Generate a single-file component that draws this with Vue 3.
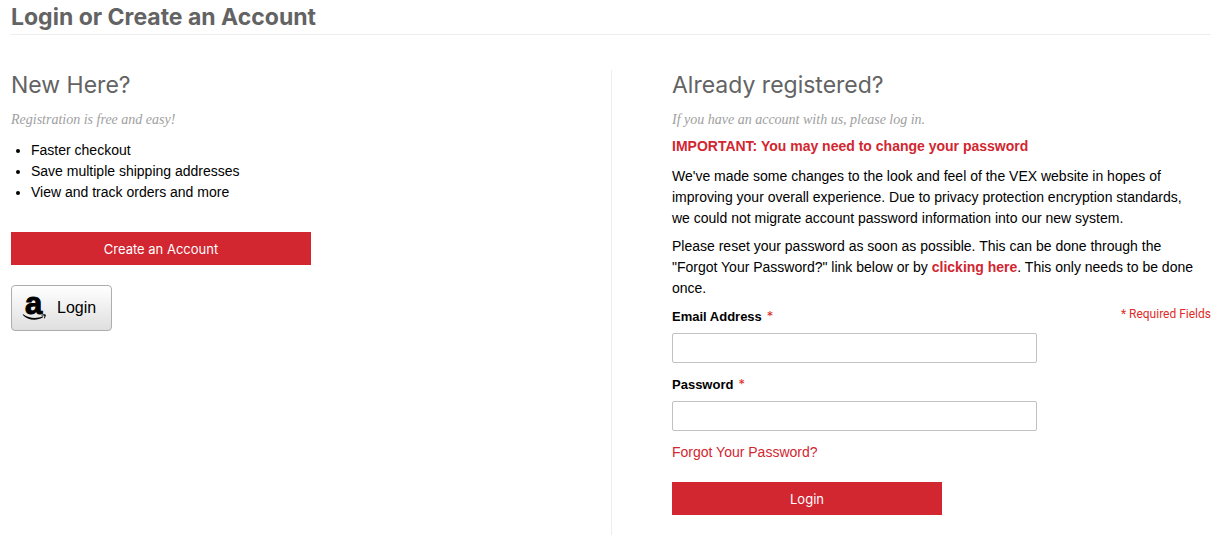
<template>
    <main class="page">
        <h1 class="page-title">Login or Create an Account</h1>

        <div class="columns">
            <section class="column new-users">
                <h2>New Here?</h2>
                <p class="subtitle">Registration is free and easy!</p>
                <ul class="benefits">
                    <li v-for="benefit in benefits" :key="benefit">{{ benefit }}</li>
                </ul>
                <button type="button" class="btn btn-create">Create an Account</button>
                <button type="button" class="btn-amazon">
                    <svg class="amazon-logo" width="26" height="44" viewBox="0 0 26 44" aria-hidden="true">
                        <text x="3" y="28" class="amazon-letter">a</text>
                        <path d="M1.200 28.200C7 32.600 15 32.800 20.800 30.200L21.400 31.100C15 35.200 5.800 34.600 0.600 28.800Z" />
                        <path d="M19.200 29C20.500 28.200 23 28.100 23.700 28.700C24.200 29.500 23.300 31.600 22.300 32.500C21.900 32.700 21.700 32.500 21.900 32.100C22.300 31.100 22.700 30.100 22.400 29.700C21.900 29.400 20.500 29.500 19.400 29.600Z" />
                    </svg>
                    <span>Login</span>
                </button>
            </section>

            <section class="column registered">
                <h2>Already registered?</h2>
                <p class="subtitle">If you have an account with us, please log in.</p>
                <p class="important">IMPORTANT: You may need to change your password</p>
                <p class="note">
                    We've made some changes to the look and feel of the VEX website in hopes of
                    improving your overall experience. Due to privacy protection encryption standards,
                    we could not migrate account password information into our new system.
                </p>
                <p class="note">
                    Please reset your password as soon as possible. This can be done through the
                    "Forgot Your Password?" link below or by <a href="#" class="reset-link">clicking here</a>.
                    This only needs to be done once.
                </p>
                <form class="login-form" @submit.prevent>
                    <div class="fields">
                        <label for="email">Email Address<em>*</em></label>
                        <input id="email" v-model="email" type="email" required />
                        <label for="password">Password<em>*</em></label>
                        <input id="password" v-model="password" type="password" required />
                        <a href="#" class="forgot">Forgot Your Password?</a>
                        <button type="submit" class="btn btn-login">Login</button>
                    </div>
                    <p class="required">* Required Fields</p>
                </form>
            </section>
        </div>
    </main>
</template>

<script setup>
import { ref } from 'vue';

const email = ref('');
const password = ref('');

const benefits = [
    'Faster checkout',
    'Save multiple shipping addresses',
    'View and track orders and more'
];
</script>

<style>
body {
    margin: 0;
    background: #fff;
}
</style>

<style scoped>
.page {
    padding: 0 8px 0 11px;
    font-family: "Liberation Sans", Arial, sans-serif;
    font-size: 14px;
    line-height: 21px;
    color: #000;
}

h1,
h2,
p,
ul {
    margin: 0;
}

.page-title {
    border-bottom: 1px solid #ededed;
    font-family: Inter, sans-serif;
    font-size: 23px;
    line-height: 34px;
    color: #636363;
}

.columns {
    display: grid;
    grid-template-columns: 1fr 1fr;
    margin-top: 35px;
}

.column {
    min-width: 0;
}

.new-users {
    display: flex;
    flex-direction: column;
    align-items: flex-start;
}

.registered {
    padding: 0 0 20px 60px;
    border-left: 1px solid #ededed;
}

h2 {
    font-family: Inter, sans-serif;
    font-size: 23px;
    font-weight: 400;
    line-height: 30px;
    color: #636363;
}

.subtitle {
    margin-top: 9px;
    font-family: "Liberation Serif", serif;
    font-style: italic;
    color: #a0a0a0;
}

.benefits {
    margin-top: 10px;
    padding-left: 20px;
}

.btn {
    height: 33px;
    padding: 0;
    border: none;
    background: #d22630;
    color: #fff;
    font-family: Inter, sans-serif;
    font-size: 13px;
    cursor: pointer;
}

.btn-create {
    width: 300px;
    max-width: 100%;
    margin-top: 29px;
}

.btn-amazon {
    display: flex;
    align-items: center;
    gap: 9px;
    height: 46px;
    margin-top: 20px;
    padding: 0 15px 0 10px;
    border: 1px solid #adadad;
    border-radius: 4px;
    background: linear-gradient(#fff, #dfdfdf);
    color: #000;
    font-family: inherit;
    font-size: 16px;
    cursor: pointer;
}

.amazon-letter {
    font-family: "Liberation Sans", sans-serif;
    font-size: 31px;
    font-weight: 700;
    stroke: #000;
    stroke-width: 1px;
}

.important {
    margin: 6px 0 9px;
    font-weight: 700;
    color: #d22630;
}

.note {
    margin-bottom: 7px;
    padding-right: 12px;
}

.reset-link {
    font-weight: 700;
    color: #d22630;
    text-decoration: none;
}

.login-form {
    display: flex;
    justify-content: space-between;
}

.fields {
    display: flex;
    flex-direction: column;
    align-items: flex-start;
    width: 365px;
}

.fields label {
    font-size: 13px;
    font-weight: 700;
}

.fields label em {
    margin-left: 5px;
    font-family: Inter, sans-serif;
    font-style: normal;
    font-weight: 400;
    line-height: 16px;
    color: #e02b27;
}

.fields input {
    box-sizing: border-box;
    width: 100%;
    height: 30px;
    margin: 6px 0 11px;
    padding: 0 9px;
    border: 1px solid #c2c2c2;
    border-radius: 2px;
    font-size: 14px;
}

.forgot {
    color: #d22630;
    text-decoration: none;
}

.btn-login {
    width: 270px;
    margin-top: 19px;
}

.required {
    font-family: Roboto, sans-serif;
    font-size: 12px;
    line-height: 16px;
    color: #e02b27;
}
</style>
